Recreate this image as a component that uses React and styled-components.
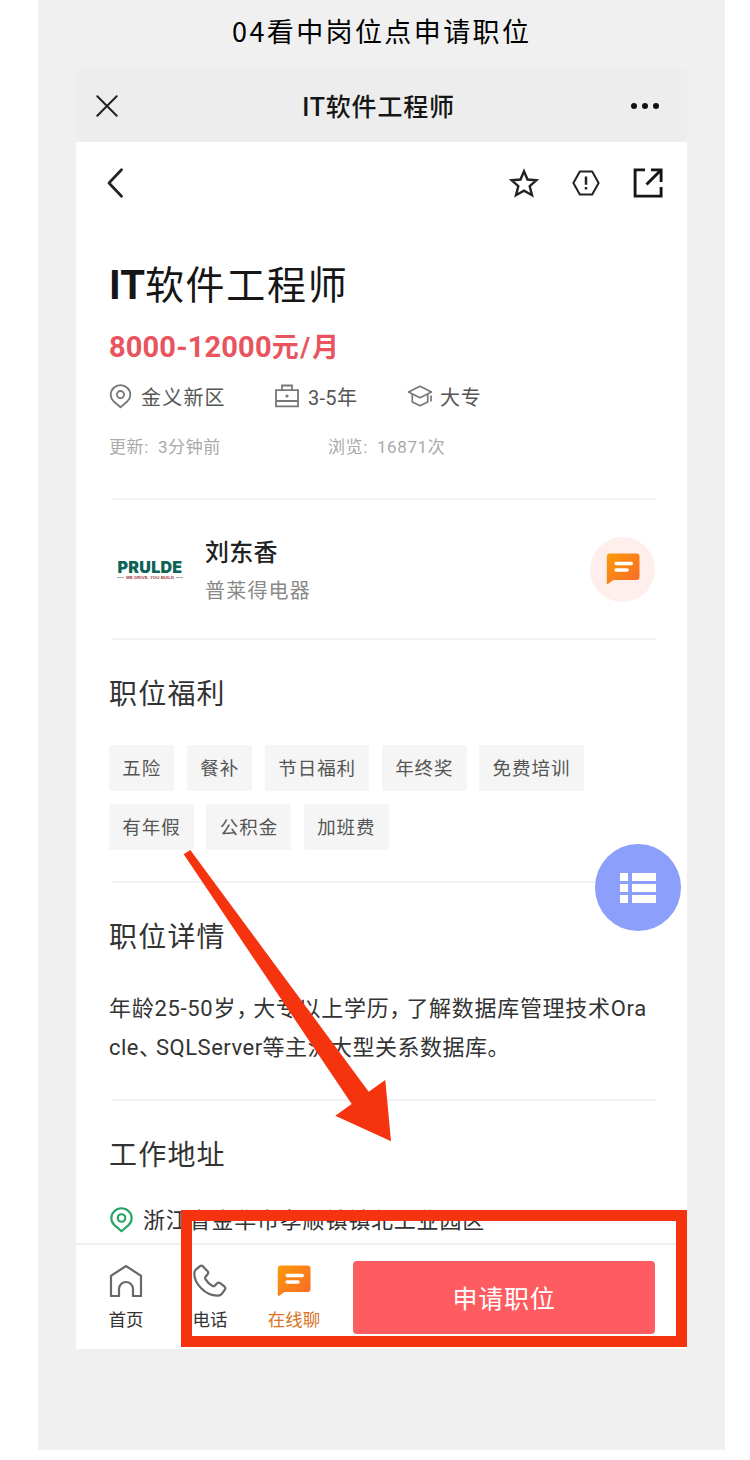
import React from "react";
import styled, { createGlobalStyle, css } from "styled-components";

const tags = [
  ["五险", "餐补", "节日福利", "年终奖", "免费培训"],
  ["有年假", "公积金", "加班费"],
];

const ChatIcon = ({ id, size }) => (
  <svg width={size} height={size} viewBox='0 0 34 34'>
    <defs>
      <linearGradient id={id} x1='0' y1='0' x2='1' y2='1'>
        <stop offset='0' stopColor='#fb9a08' />
        <stop offset='1' stopColor='#f9692a' />
      </linearGradient>
    </defs>
    <path
      d='M4 1.5H30.5Q33.5 1.5 33.5 4.5V25Q33.5 28 30.5 28H7.5L2.2 31.8Q.8 32.6 .8 31V4.7Q.8 1.5 4 1.5Z'
      fill={`url(#${id})`}
    />
    <path d='M10.2 11.5H25.2M10.2 18H21' stroke='#fff' strokeWidth='3.6' strokeLinecap='round' />
  </svg>
);

const PinIcon = ({ width, height, color, stroke }) => (
  <svg width={width} height={height} viewBox='0 0 22 25' fill='none' stroke={color} strokeWidth={stroke}>
    <path d='M11 23.3L4 17.2Q1.2 14.5 1.2 10.8A9.8 9.6 0 0 1 20.8 10.8Q20.8 14.5 18 17.2Z' strokeLinejoin='round' />
    <circle cx='11' cy='10.6' r='3.6' />
  </svg>
);

const App = () => {
  return (
    <>
      <GlobalStyle />
      <Sheet>
        <Caption>04看中岗位点申请职位</Caption>
        <Phone>
          <TitleBar>
            <svg width='22' height='22' viewBox='0 0 22 22' stroke='#222' strokeWidth='2' strokeLinecap='round'>
              <path d='M1.3 1.3L20.7 20.7M20.7 1.3L1.3 20.7' />
            </svg>
            <h2>IT软件工程师</h2>
            <svg width='30' height='8' viewBox='0 0 30 8' fill='#111'>
              <circle cx='4' cy='4' r='3' />
              <circle cx='15' cy='4' r='3' />
              <circle cx='26' cy='4' r='3' />
            </svg>
          </TitleBar>

          <Toolbar>
            <svg width='16' height='30' viewBox='0 0 16 30' fill='none' stroke='#222' strokeWidth='2.7'>
              <path d='M14.5 1.8L2 15L14.5 28.2' strokeLinecap='round' strokeLinejoin='round' />
            </svg>
            <Actions>
              <svg width='30' height='30' viewBox='0 0 30 30' fill='none' stroke='#222' strokeWidth='2.4'>
                <path d='M15 3.3L18.5 11.5L27.4 12.3L20.7 18.2L23 27.2L15 22.7L7 27.2L9.3 18.2L2.6 12.3L11.5 11.5Z' />
              </svg>
              <svg width='28' height='26' viewBox='0 0 28 26' fill='none' stroke='#222' strokeWidth='2'>
                <path d='M7.8 1.5H20.2L26.6 13L20.2 24.5H7.8L1.4 13Z' strokeLinejoin='round' />
                <path d='M14 6.5V14.7M14 16.9V19.5' strokeWidth='2.5' />
              </svg>
              <svg width='30' height='30' viewBox='0 0 30 30' fill='none' stroke='#161616' strokeWidth='2.9'>
                <path d='M12 1.9H2.1V28.1H28.1V19M18 1.9H28.1V14M28 2L13.5 16.5' />
              </svg>
            </Actions>
          </Toolbar>

          <Summary>
            <JobTitle>
              <b>IT</b>软件工程师
            </JobTitle>
            <Salary>
              8000-12000<span>元/月</span>
            </Salary>
            <Facts>
              <Fact $width={166} $gap={9} $spacing={1.2}>
                <PinIcon width={23} height={25} color='#777' stroke={1.8} />
                金义新区
              </Fact>
              <Fact $width={132} $gap={9} $spacing={0.3}>
                <svg width='24' height='24' viewBox='0 0 24 24' fill='none' stroke='#777' strokeWidth='1.8'>
                  <path d='M1 6.2H23V22.3H1ZM7 6V1.5H17V6M1 17H23' />
                  <circle cx='12' cy='12' r='.7' fill='#666' />
                </svg>
                3-5年
              </Fact>
              <Fact $gap={7} $spacing={0.7}>
                <svg width='26' height='22' viewBox='0 0 26 22' fill='none' stroke='#777' strokeWidth='1.7'>
                  <path d='M1.5 7L13 1.2L24.5 7L13 12.8Z' strokeLinejoin='round' />
                  <path d='M5.3 9.2V17L13 20.8L20.7 17V9.2M24 10.5V16.5' strokeLinejoin='round' />
                </svg>
                大专
              </Fact>
            </Facts>
            <Meta>
              <span>更新: 3分钟前</span>
              <span>浏览: 16871次</span>
            </Meta>
          </Summary>

          <Recruiter>
            <Logo>
              <strong>PRULDE</strong>
              <small>WE DRIVE, YOU BUILD</small>
            </Logo>
            <Person>
              <h3>刘东香</h3>
              <p>普莱得电器</p>
            </Person>
            <ChatButton>
              <ChatIcon id='chatTop' size={34} />
            </ChatButton>
          </Recruiter>

          <Section $height={243}>
            <SectionTitle>职位福利</SectionTitle>
            <Tags>
              {tags.map((row, i) => (
                <TagRow key={i}>
                  {row.map((tag) => (
                    <Tag key={tag}>{tag}</Tag>
                  ))}
                </TagRow>
              ))}
            </Tags>
          </Section>

          <Section $height={218}>
            <SectionTitle>职位详情</SectionTitle>
            <Description>
              <Line $spacing={0.7}>
                年龄25-50岁<Mark>，</Mark>大专以上学历<Mark>，</Mark>了解数据库管理技术Ora
              </Line>
              <Line $spacing={0.5}>
                cle<Mark>、</Mark>SQLServer等主流大型关系数据库。
              </Line>
            </Description>
          </Section>

          <Section $height={142} $last>
            <SectionTitle>工作地址</SectionTitle>
            <Address>
              <PinIcon width={23} height={26} color='#27a567' stroke={2.1} />
              <span>浙江省金华市孝顺镇镇北工业园区</span>
            </Address>
          </Section>

          <BottomBar>
            <BarItem>
              <svg width='34' height='34' viewBox='0 0 34 34' fill='none' stroke='#686868' strokeWidth='2.2'>
                <path d='M2 32V11.8L17 2L32 11.8V32H24V25A7 7 0 0 0 10 25V32Z' />
              </svg>
              首页
            </BarItem>
            <BarItem>
              <svg width='34' height='34' viewBox='0 0 34 34' fill='none' stroke='#686868' strokeWidth='2.2'>
                <path
                  d='M3.2 5.3L7 2.1Q8.6 1 10 2.4L14.6 7.3Q15.8 8.7 14.6 10.3L12.4 13Q11.8 14.2 12.6 15.4Q15 19.5 19.5 22Q20.8 22.6 21.8 21.6L24.1 19.3Q25.6 18 27.2 19.2L31.6 22.7Q33 24 31.9 25.6L29 29.7Q27.5 31.5 24.8 31.6C12 32 1.2 19 1.3 9.5Q1.4 7 3.2 5.3Z'
                  strokeLinejoin='round'
                />
              </svg>
              电话
            </BarItem>
            <BarItem $active>
              <ChatIcon id='chatBottom' size={34} />
              在线聊
            </BarItem>
            <ApplyButton>申请职位</ApplyButton>
          </BottomBar>

          <MenuButton>
            <svg width='36' height='32' viewBox='0 0 36 32' fill='#fff'>
              <path d='M0 1H8V9H0ZM12 1H36V9H12ZM0 12H8V20H0ZM12 12H36V20H12ZM0 23H8V31H0ZM12 23H36V31H12Z' />
            </svg>
          </MenuButton>
          <Arrow width='210' height='294' viewBox='0 0 210 294'>
            <path d='M1.7 5.3L8.3 1L186.7 242.7L203.3 231L209 292.3L153.3 266.7L169.7 255Z' fill='#f6330f' />
          </Arrow>
          <Highlight />
        </Phone>
      </Sheet>
    </>
  );
};

const GlobalStyle = createGlobalStyle`
  * {
    margin: 0;
    padding: 0;
    box-sizing: border-box;
  }
  body {
    background: #fff;
    font-family: Roboto, "Noto Sans CJK SC", sans-serif;
    color: #333;
  }
  svg {
    display: block;
    flex-shrink: 0;
  }
`;

// hairline under a block, starting slightly right of its text
const divider = css`
  background: linear-gradient(#f3f3f3, #f3f3f3) 3px 100% / 100% 2px no-repeat;
`;

const Sheet = styled.div`
  width: 687px;
  height: 1450px;
  margin-left: 38px;
  background: #f0f0f0;
`;

const Caption = styled.h1`
  height: 69px;
  padding-left: 194px;
  line-height: 62px;
  font-family: "Noto Sans CJK SC", sans-serif;
  font-size: 27px;
  font-weight: 400;
  letter-spacing: 2.4px;
  white-space: nowrap;
  color: #000;
`;

const Phone = styled.div`
  position: relative;
  width: 611px;
  height: 1280px;
  margin-left: 38px;
  background: #fff;
`;

const TitleBar = styled.div`
  display: flex;
  align-items: center;
  justify-content: space-between;
  height: 73px;
  padding: 0 27px 0 20px;
  background: #ededed;
  h2 {
    padding: 4px 0 0 9px;
    line-height: 34px;
    font-size: 25px;
    font-weight: 500;
    letter-spacing: 0.8px;
    color: #161616;
  }
`;

const Toolbar = styled.div`
  display: flex;
  align-items: center;
  justify-content: space-between;
  height: 82px;
  padding: 0 24px 0 31px;
`;

const Actions = styled.div`
  display: flex;
  align-items: center;
  gap: 33px;
`;

const Summary = styled.div`
  height: 276px;
  margin: 0 31px 0 33px;
  padding-top: 35px;
  ${divider}
`;

const JobTitle = styled.h1`
  height: 54px;
  line-height: 54px;
  font-size: 39px;
  font-weight: 400;
  letter-spacing: 1.7px;
  color: #161616;
  b {
    font-size: 40px;
    letter-spacing: 0;
  }
`;

const Salary = styled.p`
  height: 40px;
  margin-top: 14px;
  line-height: 40px;
  font-size: 29px;
  font-weight: 700;
  letter-spacing: 0.15px;
  color: #e8555f;
  span {
    font-size: 27px;
    letter-spacing: 1.6px;
  }
`;

const Facts = styled.div`
  display: flex;
  height: 30px;
  margin-top: 14px;
`;

const Fact = styled.div`
  display: flex;
  align-items: center;
  gap: ${({ $gap }) => $gap}px;
  width: ${({ $width }) => ($width ? `${$width}px` : "auto")};
  font-size: 20px;
  letter-spacing: ${({ $spacing }) => $spacing}px;
  color: #555;
`;

const Meta = styled.div`
  display: grid;
  grid-template-columns: 219px 1fr;
  height: 26px;
  margin-top: 23px;
  line-height: 26px;
  font-size: 17px;
  letter-spacing: 0.6px;
  word-spacing: 4.2px;
  color: #aaa;
`;

const Recruiter = styled.div`
  display: flex;
  align-items: center;
  height: 140px;
  margin: 0 31px 0 33px;
  ${divider}
`;

const Logo = styled.div`
  display: flex;
  flex-direction: column;
  align-items: center;
  width: 82px;
  margin-right: 14px;
  white-space: nowrap;
  strong {
    font-family: Inter, sans-serif;
    font-size: 16px;
    font-weight: 900;
    letter-spacing: 0.3px;
    line-height: 15px;
    color: #0d6357;
  }
  small {
    display: flex;
    align-items: center;
    gap: 2px;
    font-family: "Liberation Sans", sans-serif;
    font-size: 4.4px;
    font-weight: 700;
    line-height: 6px;
    color: #a03848;
  }
  small::before,
  small::after {
    content: "";
    width: 7px;
    height: 1px;
    background: #aaa;
  }
`;

const Person = styled.div`
  flex: 1;
  padding-top: 4px;
  h3 {
    height: 38px;
    line-height: 38px;
    font-size: 24px;
    font-weight: 500;
    letter-spacing: 0.2px;
    color: #222;
  }
  p {
    height: 38px;
    line-height: 38px;
    font-size: 20px;
    letter-spacing: 1.2px;
    color: #888;
  }
`;

const ChatButton = styled.div`
  display: flex;
  align-items: center;
  justify-content: center;
  width: 65px;
  height: 65px;
  margin: -2px 1px 0 0;
  border-radius: 50%;
  background: #feefed;
`;

const Section = styled.div`
  height: ${({ $height }) => $height}px;
  margin: 0 31px 0 33px;
  padding-top: 34px;
  ${({ $last }) => !$last && divider}
`;

const SectionTitle = styled.h2`
  height: 40px;
  line-height: 41px;
  font-size: 28px;
  font-weight: 400;
  letter-spacing: 1.2px;
  color: #333;
`;

const Tags = styled.div`
  display: flex;
  flex-direction: column;
  gap: 13px;
  margin-top: 31px;
`;

const TagRow = styled.div`
  display: flex;
  gap: 12.6px;
`;

const Tag = styled.span`
  height: 46px;
  padding: 0 13.2px 0 13.3px;
  border-radius: 2px;
  line-height: 48px;
  font-size: 18.5px;
  letter-spacing: 0.95px;
  background: #f5f5f5;
  color: #555;
`;

const Description = styled.div`
  margin-top: 32px;
  font-size: 22px;
  white-space: nowrap;
`;

const Line = styled.p`
  height: 39px;
  line-height: 39px;
  letter-spacing: ${({ $spacing }) => $spacing}px;
`;

// full-width punctuation set tighter than its em box
const Mark = styled.span`
  letter-spacing: -5px;
`;

const Address = styled.div`
  display: flex;
  align-items: center;
  gap: 10px;
  height: 34px;
  margin-top: 28px;
  padding-left: 1px;
  span {
    line-height: 34px;
    margin-top: 1px;
    font-size: 22px;
    letter-spacing: 0.8px;
  }
`;

const BottomBar = styled.div`
  display: flex;
  height: 106px;
  padding: 19px 0 0 8px;
  border-top: 2px solid #efefef;
  background: #fff;
`;

const BarItem = styled.div`
  display: flex;
  flex-direction: column;
  align-items: center;
  gap: 9px;
  width: 84px;
  font-size: 17.5px;
  line-height: 27px;
  color: ${({ $active }) => ($active ? "#d9731f" : "#333")};
`;

const ApplyButton = styled.button`
  width: 302px;
  height: 73px;
  margin: -3px 0 0 17px;
  padding-bottom: 2px;
  border: none;
  border-radius: 4px;
  font-family: inherit;
  font-size: 25px;
  letter-spacing: 0.7px;
  background: #fe5c60;
  color: #fff;
`;

const MenuButton = styled.div`
  position: absolute;
  top: 775px;
  left: 519px;
  display: flex;
  align-items: center;
  justify-content: center;
  width: 86px;
  height: 87px;
  border-radius: 50%;
  background: #8b9ffb;
`;

const Arrow = styled.svg`
  position: absolute;
  top: 780px;
  left: 106px;
`;

const Highlight = styled.div`
  position: absolute;
  top: 1141px;
  left: 105px;
  width: 505.5px;
  height: 137px;
  border: 11px solid #f6330f;
`;

export default App;
